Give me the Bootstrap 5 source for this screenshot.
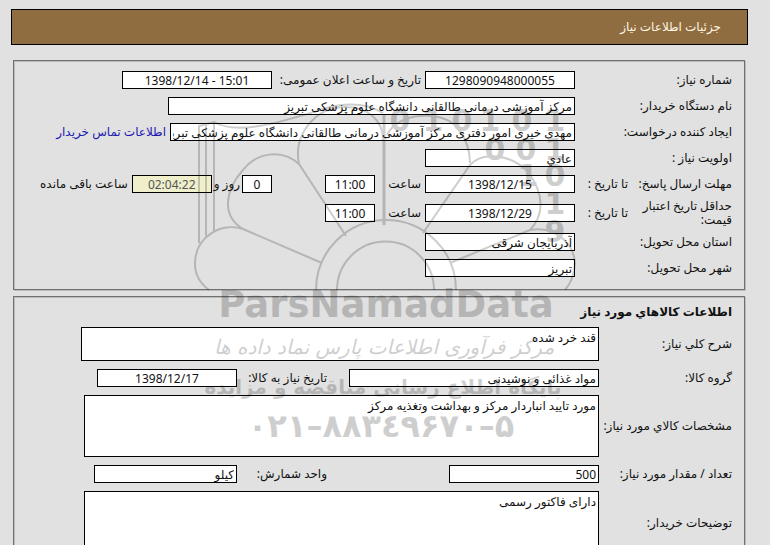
<!DOCTYPE html>
<html lang="fa" dir="rtl">
<head>
<meta charset="utf-8">
<meta name="viewport" content="width=device-width, initial-scale=1">
<title>جزئیات اطلاعات نیاز</title>
<link rel="stylesheet" href="https://cdn.jsdelivr.net/npm/bootstrap@5.3.0/dist/css/bootstrap.min.css">
<style>
body{background:#e1e1e1;color:#111;font:12px/14px "Noto Sans","DejaVu Sans",sans-serif}
.page{padding:9px 22px 11px 11px}
.title-bar{height:36px;background:#8f6d40;border:1px solid #000;color:#fff6e4;padding:0 26px}
.panel{margin:0 3px 0 2px;border:1px solid #707070;box-shadow:inset 1px 1px 0 #bcbcbc,1px 1px 0 #bcbcbc;padding:8px 12px 12px}
.panel-need{margin-top:15px;padding-top:10px}
.panel-goods{margin-top:6px}
.rows{display:flex;flex-direction:column;gap:8px}
.field{border:1px solid #000;border-radius:0;background:#fff;color:#111;padding:0 2px;height:18px;min-height:0;font-size:12px;line-height:16px;flex:none;width:150px;resize:none}
.field:focus{box-shadow:none;border-color:#000}
textarea.field{flex:1 1 0;width:auto;overflow:hidden;padding-top:2px}
.c1{flex:none;width:157px}
.c2{flex:none;width:133px;white-space:nowrap}
.tag{width:104px;flex:none}
.mid{flex:none;width:153px;padding-right:4px}
.hour{flex:none;width:50px;padding-right:4px}
.need{flex:none;width:112px;padding-right:22px;white-space:nowrap}
.unit{flex:none;width:212px;padding-right:122px}
.two{height:24px}
.w-org{width:407px}.w-person{width:405px}.w-time{width:50px}.w-day{width:30px}
.w-left{width:80px;background:#efefcc;color:#555}
.w-group{width:250px}.w-need{width:140px}.w-unit{width:143px}
.h-desc{height:34px}.h-spec{height:62px}.h-note{height:64px}
.end-a{margin-left:55px}.end-b{margin-left:58px}
.gap-day{margin-right:53px}
.days{margin:0 2px}
.contact{color:#2018b0;text-decoration:none}
.heading{font-size:12px;font-weight:700;line-height:14px;margin:0}
.watermark{position:absolute;top:0;left:0;pointer-events:none;opacity:.19}
.watermark text{font-family:"DejaVu Sans",sans-serif;font-weight:700;direction:ltr;text-anchor:middle}
.watermark .bits{font-size:30px}
.watermark .brand{font-size:37px}
.watermark .motto{font-size:20px;font-weight:400;font-style:italic}
.watermark .service{font-size:20px}
.watermark .phone{font-size:32px}
</style>
<script src="https://cdn.jsdelivr.net/npm/bootstrap@5.3.0/dist/js/bootstrap.bundle.min.js"></script>
</head>
<body>
<main class="page position-relative">
  <header class="title-bar d-flex align-items-center">جزئیات اطلاعات نیاز</header>

  <section class="panel panel-need rows">
    <div class="d-flex align-items-center">
      <label class="c1" for="no">شماره نیاز:</label>
      <input id="no" class="form-control field text-center" value="1298090948000055" readonly>
      <label class="mid text-nowrap" for="pub">تاریخ و ساعت اعلان عمومی:</label>
      <input id="pub" class="form-control field text-center" dir="ltr" value="1398/12/14 - 15:01" readonly>
    </div>
    <div class="d-flex align-items-center">
      <label class="c1" for="org">نام دستگاه خریدار:</label>
      <input id="org" class="form-control field w-org" value="مرکز آموزشی درمانی طالقانی دانشگاه علوم پزشکی تبریز" readonly>
    </div>
    <div class="d-flex align-items-center">
      <label class="c1" for="person">ایجاد کننده درخواست:</label>
      <input id="person" class="form-control field w-person" value="مهدی خیری امور دفتری مرکز آموزشی درمانی طالقانی دانشگاه علوم پزشکی تبریز" readonly>
      <a class="contact me-1 text-nowrap" href="#">اطلاعات تماس خریدار</a>
    </div>
    <div class="d-flex align-items-center">
      <label class="c1" for="prio">اولویت نیاز :</label>
      <input id="prio" class="form-control field" value="عادي" readonly>
    </div>
    <div class="d-flex align-items-center">
      <div class="c1 d-flex"><span class="tag">مهلت ارسال پاسخ:</span><label for="d1" class="text-nowrap">تا تاریخ :</label></div>
      <input id="d1" class="form-control field text-center" dir="ltr" value="1398/12/15" readonly>
      <label class="hour" for="t1">ساعت</label>
      <input id="t1" class="form-control field text-center w-time" value="11:00" readonly>
      <input id="day" class="form-control field text-center w-day gap-day" value="0" readonly>
      <label class="days text-nowrap" for="day">روز و</label>
      <input id="left" class="form-control field text-center w-left" value="02:04:22" readonly>
      <label class="me-1 text-nowrap" for="left">ساعت باقی مانده</label>
    </div>
    <div class="two d-flex align-items-center">
      <div class="c1 d-flex align-items-center"><span class="tag">حداقل تاریخ اعتبار قیمت:</span><label for="d2" class="text-nowrap">تا تاریخ :</label></div>
      <input id="d2" class="form-control field text-center" dir="ltr" value="1398/12/29" readonly>
      <label class="hour" for="t2">ساعت</label>
      <input id="t2" class="form-control field text-center w-time" value="11:00" readonly>
    </div>
    <div class="d-flex align-items-center">
      <label class="c1" for="prov">استان محل تحویل:</label>
      <input id="prov" class="form-control field" value="آذربایجان شرقی" readonly>
    </div>
    <div class="d-flex align-items-center">
      <label class="c1" for="city">شهر محل تحویل:</label>
      <input id="city" class="form-control field" value="تبریز" readonly>
    </div>
  </section>

  <section class="panel panel-goods rows">
    <h2 class="heading">اطلاعات کالاهاي مورد نیاز</h2>
    <div class="d-flex align-items-center">
      <label class="c2" for="desc">شرح کلي نیاز:</label>
      <textarea id="desc" class="form-control field h-desc end-a" readonly>قند خرد شده</textarea>
    </div>
    <div class="d-flex align-items-center">
      <label class="c2" for="group">گروه کالا:</label>
      <input id="group" class="form-control field w-group" value="مواد غذائی و نوشیدنی" readonly>
      <label class="need" for="date">تاریخ نیاز به کالا:</label>
      <input id="date" class="form-control field text-center w-need" dir="ltr" value="1398/12/17" readonly>
    </div>
    <div class="d-flex align-items-center">
      <label class="c2" for="spec">مشخصات کالاي مورد نیاز:</label>
      <textarea id="spec" class="form-control field h-spec end-b" readonly>مورد تایید انباردار مرکز و بهداشت وتغذیه مرکز</textarea>
    </div>
    <div class="d-flex align-items-center">
      <label class="c2" for="qty">تعداد / مقدار مورد نیاز:</label>
      <input id="qty" class="form-control field" value="500" readonly>
      <label class="unit" for="unit">واحد شمارش:</label>
      <input id="unit" class="form-control field w-unit" value="کیلو" readonly>
    </div>
    <div class="d-flex align-items-center">
      <label class="c2" for="note">توضیحات خریدار:</label>
      <textarea id="note" class="form-control field h-note end-b" readonly>دارای فاکتور رسمی</textarea>
    </div>
  </section>

  <svg class="watermark" width="600" height="460" viewBox="0 0 600 460" aria-hidden="true">
    <g fill="none" stroke="#000" stroke-width="2">
      <path d="M316 290A70 70 0 0 1 456 290M337 290A48.500 48.500 0 0 1 434 290"/>
      <path d="M322 263L243 229C222 222 195 236 195 264C195 276 201 284 209 290"/>
      <path d="M346 236L299 164C281 148 256 153 243 170C225 190 221 216 243 229"/>
      <path d="M299 164C293 135 315 107 345 107C368 107 383 120 383 140"/>
      <path stroke-width="3" d="M384 114V225"/>
      <path d="M214 122C240 137 290 119 330 107Q362 100 383 113"/>
      <path d="M199 243V126L214 122V231M206 236V124"/>
      <path d="M387 135C397 113 440 109 457 127Q470 143 470 163"/>
      <path d="M423 233L470 165C482 152 510 153 528 172C545 195 544 215 530 230"/>
      <path d="M450 263L530 230C552 226 573 240 575 263Q574 280 565 290"/>
    </g>
    <g fill="#000">
      <text class="bits" x="400 433 462 490 522 555" y="131">010101</text>
      <text class="bits" x="495 526 555" y="160">001</text>
      <text class="bits" x="528 555" y="186">10</text>
      <text class="bits" x="555" y="214">1</text>
      <text class="bits" x="555" y="242">9</text>
      <text class="brand" x="386" y="317">ParsNamadData</text>
      <text class="motto" x="384" y="354">مرکز فرآوری اطلاعات پارس نماد داده ها</text>
      <text class="service" x="383" y="394">پایگاه اطلاع رسانی مناقصه و مزایده</text>
      <text class="phone" x="381" y="437">۰۲۱–۸۸۳٤۹۶۷۰–۵</text>
    </g>
  </svg>
</main>
</body>
</html>
